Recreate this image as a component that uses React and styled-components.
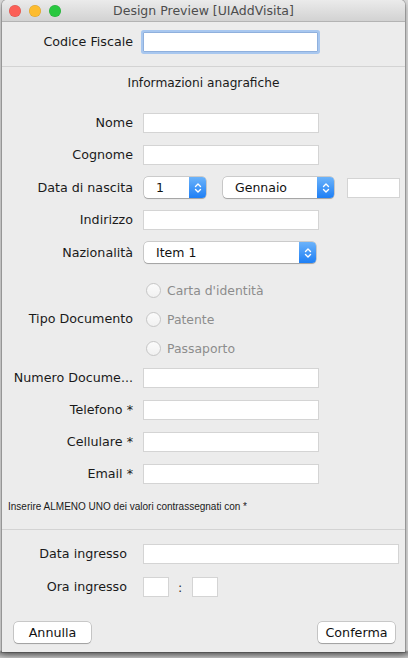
import React from "react";
import styled, { createGlobalStyle } from "styled-components";

const Global = createGlobalStyle`
  html, body { margin: 0; padding: 0; }
  body {
    width: 408px; height: 658px; overflow: hidden;
    background: linear-gradient(to bottom, #d9d9d9 0, #d9d9d9 650px, #8a8a8a 652px, #c4c4c4 658px);
    font-family: "DejaVu Sans", "Liberation Sans", sans-serif;
  }
`;

const Window = styled.div`
  margin-left: 2px;
  width: 403px;
  height: 652px;
  display: flex;
  flex-direction: column;
  background: #ececec;
  border-radius: 5px 5px 0 0;
  box-shadow: 0 0 0 1px rgba(0,0,0,0.18), 0 3px 6px rgba(0,0,0,0.35);
  overflow: hidden;
`;

const TitleBar = styled.div`
  height: 22px;
  flex: none;
  position: relative;
  display: flex;
  align-items: center;
  justify-content: center;
  background: linear-gradient(to bottom, #ebebeb, #d2d2d2);
  border-bottom: 1px solid #b3b3b3;
  box-sizing: border-box;
  font-size: 12.5px;
  color: #4d4d4d;
`;

const Lights = styled.div`
  position: absolute;
  left: 7px;
  top: 5px;
  display: flex;
  gap: 8px;
`;

const Light = styled.span`
  width: 12px;
  height: 12px;
  border-radius: 50%;
  background: ${(p) => p.$c};
  box-shadow: inset 0 0 0 0.5px rgba(0,0,0,0.15);
`;

const Section = styled.div`
  display: grid;
  grid-template-columns: ${(p) => p.$label}px auto;
  column-gap: ${(p) => p.$gap}px;
  row-gap: ${(p) => p.$rowGap || 12}px;
  align-items: center;
  padding: ${(p) => p.$pad};
`;

const Label = styled.div`
  font-size: 12.7px;
  color: #1a1a1a;
  text-align: right;
  white-space: nowrap;
  line-height: 20px;
  ${(p) => p.$top !== undefined && `align-self: start; padding-top: ${p.$top}px;`}
`;

const Input = styled.div`
  box-sizing: border-box;
  width: ${(p) => p.$w}px;
  height: 20px;
  margin-left: ${(p) => p.$ml || 0}px;
  background: #fff;
  border: 1px solid #d4d4d4;
  ${(p) => p.$focus && `
    border-color: #8fb0dd;
    box-shadow: 0 0 0 2px #a8c7ef;
    border-radius: 1px;
  `}
`;

const Divider = styled.div`
  height: 1px;
  background: #d3d3d3;
  margin: ${(p) => p.$m};
`;

const Heading = styled.div`
  text-align: center;
  font-size: 12.2px;
  color: #1a1a1a;
  padding: 9px 0 23px;
`;

const Inline = styled.div`
  display: flex;
  align-items: center;
  gap: ${(p) => p.$gap}px;
`;

const SelectBox = styled.div`
  box-sizing: border-box;
  width: ${(p) => p.$w}px;
  height: 21px;
  display: flex;
  align-items: center;
  background: #fff;
  border-radius: 4px;
  box-shadow: 0 0 0 0.5px rgba(0,0,0,0.28), 0 1px 1px rgba(0,0,0,0.2);
  overflow: hidden;
  margin-left: 1px;
`;

const SelectText = styled.span`
  flex: 1;
  font-size: 12.5px;
  color: #111;
  padding-left: ${(p) => p.$pl}px;
  white-space: nowrap;
`;

const Stepper = styled.span`
  width: 17px;
  height: 100%;
  display: flex;
  align-items: center;
  justify-content: center;
  background: linear-gradient(to bottom, #6cb3fa, #1e7ff5);
`;

const Chevrons = () => (
  <svg width="8" height="12" viewBox="0 0 8 12" fill="none" stroke="#fff" strokeWidth="1.4" strokeLinecap="round" strokeLinejoin="round">
    <path d="M1.5 4.5 L4 2 L6.5 4.5" />
    <path d="M1.5 7.5 L4 10 L6.5 7.5" />
  </svg>
);

const Select = ({ w, text, pl }) => (
  <SelectBox $w={w}>
    <SelectText $pl={pl}>{text}</SelectText>
    <Stepper>
      <Chevrons />
    </Stepper>
  </SelectBox>
);

const RadioGroup = styled.div`
  display: flex;
  flex-direction: column;
  gap: 9px;
  padding-top: 5px;
  margin-bottom: -2px;
`;

const RadioRow = styled.div`
  display: flex;
  align-items: center;
  gap: 6px;
  height: 20px;
  padding-left: 3px;
  font-size: 12.4px;
  color: #8c8c8c;
`;

const RadioDot = styled.span`
  box-sizing: border-box;
  width: 15px;
  height: 15px;
  border-radius: 50%;
  background: linear-gradient(to bottom, #fbfbfb, #f1f1f1);
  border: 1px solid #c6c6c6;
`;

const Note = styled.div`
  font-family: "Liberation Sans", Arial, sans-serif;
  font-size: 10px;
  color: #1a1a1a;
  padding: 17px 0 0 6px;
  height: 18px;
`;

const Colon = styled.span`
  font-size: 12.7px;
  color: #333;
  padding: 0 10px 0 9px;
`;

const Footer = styled.div`
  display: flex;
  justify-content: space-between;
  padding: 25px 10px 0 12px;
`;

const Button = styled.div`
  box-sizing: border-box;
  width: 77px;
  height: 21px;
  display: flex;
  align-items: center;
  justify-content: center;
  background: #fff;
  border-radius: 4px;
  box-shadow: 0 0 0 0.5px rgba(0,0,0,0.3), 0 1px 1px rgba(0,0,0,0.2);
  font-size: 12.7px;
  color: #111;
`;

export default function App() {
  return (
    <>
      <Global />
      <Window>
        <TitleBar>
          <Lights>
            <Light $c="#fc5f57" />
            <Light $c="#fdbc2e" />
            <Light $c="#29c840" />
          </Lights>
          Design Preview [UIAddVisita]
        </TitleBar>

        <Section $label={131} $gap={10} $pad="10px 0 0 0">
          <Label>Codice Fiscale</Label>
          <Input $w={175} $focus />
        </Section>

        <Divider $m="14px 0 0 0" />
        <Heading>Informazioni anagrafiche</Heading>

        <Section $label={131} $gap={10} $pad="0">
          <Label>Nome</Label>
          <Input $w={176} />
          <Label>Cognome</Label>
          <Input $w={176} />
          <Label>Data di nascita</Label>
          <Inline $gap={16}>
            <Select w={62} text="1" pl={12} />
            <Select w={111} text="Gennaio" pl={12} />
            <Input $w={53} $ml={-3} />
          </Inline>
          <Label>Indirizzo</Label>
          <Input $w={176} />
          <Label>Nazionalità</Label>
          <Select w={172} text="Item 1" pl={12} />
          <Label $top={34}>Tipo Documento</Label>
          <RadioGroup>
            <RadioRow><RadioDot />Carta d'identità</RadioRow>
            <RadioRow><RadioDot />Patente</RadioRow>
            <RadioRow><RadioDot />Passaporto</RadioRow>
          </RadioGroup>
          <Label>Numero Docume...</Label>
          <Input $w={176} />
          <Label>Telefono *</Label>
          <Input $w={176} />
          <Label>Cellulare *</Label>
          <Input $w={176} />
          <Label>Email *</Label>
          <Input $w={176} />
        </Section>

        <Note>Inserire ALMENO UNO dei valori contrassegnati con *</Note>
        <Divider $m="10px 0 0 0" />

        <Section $label={125} $gap={16} $rowGap={13} $pad="14px 0 0 0">
          <Label>Data ingresso</Label>
          <Input $w={256} />
          <Label>Ora ingresso</Label>
          <Inline $gap={0}>
            <Input $w={26} />
            <Colon>:</Colon>
            <Input $w={26} />
          </Inline>
        </Section>

        <Footer>
          <Button>Annulla</Button>
          <Button>Conferma</Button>
        </Footer>
      </Window>
    </>
  );
}
